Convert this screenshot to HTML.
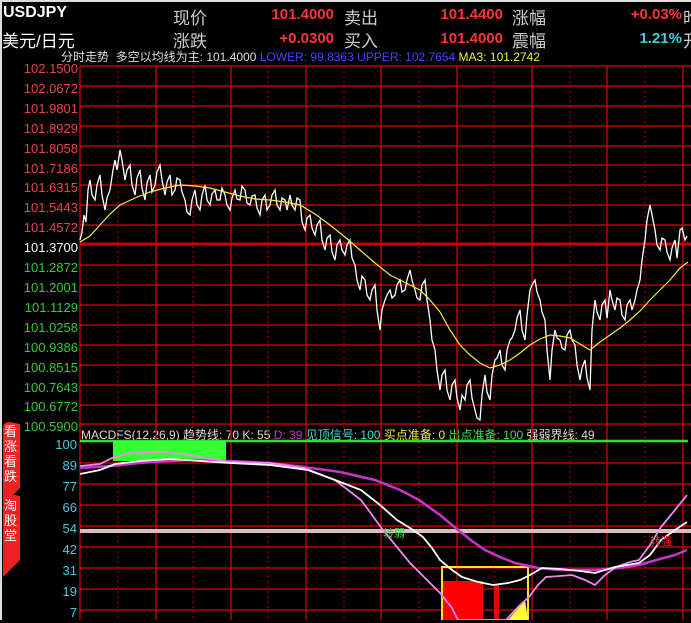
<!DOCTYPE html>
<html><head><meta charset="utf-8"><style>
body{margin:0;background:#000;width:691px;height:620px;overflow:hidden;font-family:"Liberation Sans","Noto Sans CJK SC",sans-serif}
.t{position:absolute;white-space:nowrap}
</style></head><body>
<div style="position:absolute;left:0;top:0;width:691px;height:2px;background:#ddd"></div>
<div style="position:absolute;left:0;top:0;width:2px;height:620px;background:#ddd"></div>
<div class="t" style="left:3px;top:4px;font-size:16px;color:#fff;font-weight:bold">USDJPY</div>
<div class="t" style="left:2px;top:27px;font-size:17px;color:#fff">美元/日元</div>
<div class="t" style="left:173px;top:4px;font-size:17px;color:#ccc">现价</div>
<div class="t" style="left:173px;top:27px;font-size:17px;color:#ccc">涨跌</div>
<div class="t" style="left:204px;top:6px;width:130px;text-align:right;font-size:15px;color:#f33;font-weight:bold">101.4000</div>
<div class="t" style="left:204px;top:30px;width:130px;text-align:right;font-size:15px;color:#f33;font-weight:bold">+0.0300</div>
<div class="t" style="left:344px;top:4px;font-size:17px;color:#ccc">卖出</div>
<div class="t" style="left:344px;top:27px;font-size:17px;color:#ccc">买入</div>
<div class="t" style="left:373px;top:6px;width:130px;text-align:right;font-size:15px;color:#f33;font-weight:bold">101.4400</div>
<div class="t" style="left:373px;top:30px;width:130px;text-align:right;font-size:15px;color:#f33;font-weight:bold">101.4000</div>
<div class="t" style="left:512px;top:4px;font-size:17px;color:#ccc">涨幅</div>
<div class="t" style="left:512px;top:27px;font-size:17px;color:#ccc">震幅</div>
<div class="t" style="left:560px;top:6px;width:122px;text-align:right;font-size:15px;color:#f33;font-weight:bold">+0.03%</div>
<div class="t" style="left:560px;top:30px;width:122px;text-align:right;font-size:15px;color:#4cd;font-weight:bold">1.21%</div>
<div class="t" style="left:683px;top:4px;font-size:17px;color:#ccc">昨</div>
<div class="t" style="left:683px;top:27px;font-size:17px;color:#ccc">开</div>
<div class="t" style="left:61px;top:48px;font-size:12px;color:#ddd">分时走势&nbsp; 多空以均线为主: 101.4000 <span style="color:#44f">LOWER: 99.8363</span> <span style="color:#44f">UPPER: 102.7654</span> <span style="color:#ee4">MA3: 101.2742</span></div>
<div class="t" style="left:81px;top:426px;font-size:12px;color:#ddd">MACDFS(12,26,9) 趋势线: 70 K: 55 <span style="color:#c3c">D: 39</span> <span style="color:#4dd">见顶信号: 100</span> <span style="color:#ee4">买点准备: 0</span> <span style="color:#4d4">出点准备: 100</span> 强弱界线: 49</div>
<svg width="691" height="620" style="position:absolute;left:0;top:0">
<g stroke="#b00" stroke-width="1.5">
<line x1="80" y1="66" x2="80" y2="620"/>
<line x1="156" y1="66" x2="156" y2="620"/><line x1="231" y1="66" x2="231" y2="620"/><line x1="306" y1="66" x2="306" y2="620"/><line x1="381" y1="66" x2="381" y2="620"/><line x1="457" y1="66" x2="457" y2="620"/><line x1="532" y1="66" x2="532" y2="620"/><line x1="607" y1="66" x2="607" y2="620"/><line x1="683" y1="66" x2="683" y2="620"/>
</g>
<g stroke="#b00" stroke-width="1" stroke-dasharray="2,3">
<line x1="118" y1="66" x2="118" y2="620"/><line x1="193" y1="66" x2="193" y2="620"/><line x1="268" y1="66" x2="268" y2="620"/><line x1="344" y1="66" x2="344" y2="620"/><line x1="419" y1="66" x2="419" y2="620"/><line x1="494" y1="66" x2="494" y2="620"/><line x1="570" y1="66" x2="570" y2="620"/><line x1="645" y1="66" x2="645" y2="620"/>
</g>
<g stroke="#b00" stroke-width="1.5">
<line x1="80" y1="66" x2="691" y2="66"/><line x1="80" y1="86" x2="691" y2="86"/><line x1="80" y1="106" x2="691" y2="106"/><line x1="80" y1="126" x2="691" y2="126"/><line x1="80" y1="146" x2="691" y2="146"/><line x1="80" y1="165" x2="691" y2="165"/><line x1="80" y1="185" x2="691" y2="185"/><line x1="80" y1="205" x2="691" y2="205"/><line x1="80" y1="225" x2="691" y2="225"/><line x1="80" y1="265" x2="691" y2="265"/><line x1="80" y1="285" x2="691" y2="285"/><line x1="80" y1="305" x2="691" y2="305"/><line x1="80" y1="325" x2="691" y2="325"/><line x1="80" y1="345" x2="691" y2="345"/><line x1="80" y1="365" x2="691" y2="365"/><line x1="80" y1="385" x2="691" y2="385"/><line x1="80" y1="405" x2="691" y2="405"/><line x1="80" y1="424" x2="691" y2="424"/>
<line x1="80" y1="463" x2="691" y2="463"/><line x1="80" y1="484" x2="691" y2="484"/><line x1="80" y1="505" x2="691" y2="505"/><line x1="80" y1="526" x2="691" y2="526"/><line x1="80" y1="547" x2="691" y2="547"/><line x1="80" y1="568" x2="691" y2="568"/><line x1="80" y1="589" x2="691" y2="589"/><line x1="80" y1="610" x2="691" y2="610"/>
</g>
<line x1="80" y1="244" x2="691" y2="244" stroke="#c00" stroke-width="3"/>
<polyline fill="none" stroke="#fff" stroke-width="1.3" points="80,240 82,232 84,215 86,222 88,190 90,180 92,195 95,200 97,185 100,175 102,195 105,210 107,198 110,190 113,170 115,160 117,170 120,150 122,160 125,180 127,170 130,165 132,185 135,195 137,178 140,170 142,188 145,200 147,183 150,175 152,192 155,185 157,172 160,165 162,180 165,195 167,182 170,175 172,195 175,190 177,178 180,180 182,192 185,200 187,212 190,215 192,200 195,190 197,205 200,210 202,195 205,185 207,200 210,205 212,194 215,190 217,200 220,200 222,188 225,195 227,205 230,210 232,198 235,190 237,199 240,200 242,186 245,190 247,203 250,205 252,196 255,195 257,208 260,215 262,200 265,195 267,210 270,205 272,195 275,190 277,205 280,210 282,198 285,200 287,210 290,195 292,205 295,210 297,198 300,200 302,222 305,230 307,218 310,215 312,228 315,235 317,225 320,220 322,240 325,250 327,238 330,235 332,252 335,260 337,245 340,240 342,250 345,255 347,245 350,240 352,258 355,265 357,280 360,290 362,276 365,280 367,295 370,300 372,290 375,285 377,310 380,330 382,310 385,300 387,295 390,290 392,298 395,295 397,285 400,280 402,292 405,290 407,280 410,270 412,280 415,290 417,298 420,300 422,285 425,280 427,300 430,320 432,340 435,350 437,370 440,390 442,375 445,370 447,390 450,400 452,385 455,380 457,398 460,410 462,395 465,400 467,385 470,380 472,398 475,410 477,418 480,420 482,395 485,375 487,392 490,400 492,375 495,360 497,358 500,350 502,365 505,370 507,350 510,340 512,338 515,330 517,318 520,310 522,330 525,340 527,315 530,290 532,285 535,280 537,292 540,300 542,312 545,320 547,350 550,380 552,350 555,330 557,338 560,340 562,348 565,350 567,335 570,330 572,340 575,345 577,365 580,380 582,368 585,360 587,378 590,390 592,330 595,300 597,312 600,320 602,305 605,300 607,318 610,290 612,300 615,310 617,298 620,300 622,315 625,320 627,305 630,300 632,310 635,300 637,290 640,280 642,260 645,240 647,220 650,205 652,215 655,230 657,245 660,250 662,238 665,240 667,252 670,260 672,248 675,240 677,258 680,230 682,228 685,240 687,236"/>
<polyline fill="none" stroke="#ee4" stroke-width="1.2" points="80,242 90,236 100,225 110,214 120,205 135,198 150,192 165,188 180,185 195,186 210,188 225,192 240,196 255,199 270,200 285,202 300,205 315,214 330,225 345,237 360,250 375,263 390,275 400,280 410,285 420,290 430,300 440,312 450,330 460,345 470,355 480,363 490,368 500,365 510,360 520,353 530,345 540,339 550,335 560,336 570,338 580,344 590,350 600,342 610,335 620,328 630,320 640,311 650,300 660,290 670,280 680,268 688,262"/>
<line x1="80" y1="441" x2="688" y2="441" stroke="#3d3" stroke-width="2.5"/>
<rect x="113" y="441" width="113" height="20" fill="#3f3"/>
<line x1="80" y1="531" x2="691" y2="531" stroke="#dbb" stroke-width="4"/>
<rect x="442" y="567" width="86" height="53" fill="none" stroke="#fd3" stroke-width="2"/>
<rect x="443" y="581" width="40" height="39" fill="#f00"/>
<rect x="494" y="585" width="5" height="35" fill="#e00"/>
<polygon points="508,620 525,600 528,620" fill="#ff3"/>
<polyline fill="none" stroke="#c3c" stroke-width="2.5" points="80,468 110,466 150,462 190,460 230,461 270,463 304,467 340,472 375,480 400,490 419,500 440,515 458,530 472,541 485,550 500,557 515,563 538,568 560,570 595,570 620,568 639,565 660,559 675,555 687,550"/>
<polyline fill="none" stroke="#e8e" stroke-width="1.8" points="80,466 100,464 112,458 130,453 160,452 185,454 205,458 230,462 270,463 304,468 335,480 361,500 383,530 410,563 425,578 440,593 452,608 458,620 506,620 520,605 529,597 538,585 546,577 560,576 572,575 585,580 595,585 605,575 616,567 630,562 639,560 650,545 661,527 675,510 687,495"/>
<polyline fill="none" stroke="#fff" stroke-width="1.8" points="80,474 100,470 115,464 140,461 170,459 200,461 230,463 270,465 308,470 335,480 361,490 380,505 397,520 410,528 423,537 432,548 440,560 452,570 462,577 478,582 493,585 508,583 520,580 530,575 542,568 560,569 580,571 595,573 615,567 639,563 650,555 661,540 675,530 687,522"/>
<text x="383" y="537" font-size="11" fill="#3c3" font-family="Liberation Sans,Noto Sans CJK SC,sans-serif">转弱</text>
<text x="650" y="545" font-size="11" fill="#e22" font-family="Liberation Sans,Noto Sans CJK SC,sans-serif">转强</text>
<path d="M3,428 Q3,422 10,422 L20,424 L20,488 L3,505 Z" fill="#e22"/>
<path d="M3,500 Q3,494 10,494 L20,496 L20,560 L3,577 Z" fill="#e22"/>
</svg>
<div class="t" style="left:4px;top:424px;width:14px;font-size:13px;line-height:15px;color:#fff;white-space:normal">看涨看跌</div>
<div class="t" style="left:4px;top:498px;width:14px;font-size:13px;line-height:15px;color:#fff;white-space:normal">淘股堂</div>
<div style="position:absolute;left:0;top:59px;width:78px;font-size:13px;line-height:19.9px;text-align:right;color:#e44">
102.1500<br>102.0672<br>101.9801<br>101.8929<br>101.8058<br>101.7186<br>101.6315<br>101.5443<br>101.4572<br><span style="color:#fff">101.3700</span><br><span style="color:#3c3">101.2872<br>101.2001<br>101.1129<br>101.0258<br>100.9386<br>100.8515<br>100.7643<br>100.6772<br>100.5900</span></div>
<div style="position:absolute;left:0;top:434px;width:77px;font-size:13px;line-height:21px;text-align:right;color:#4cd">100<br>89<br>77<br>66<br>54<br>42<br>31<br>19<br>7</div>
</body></html>
